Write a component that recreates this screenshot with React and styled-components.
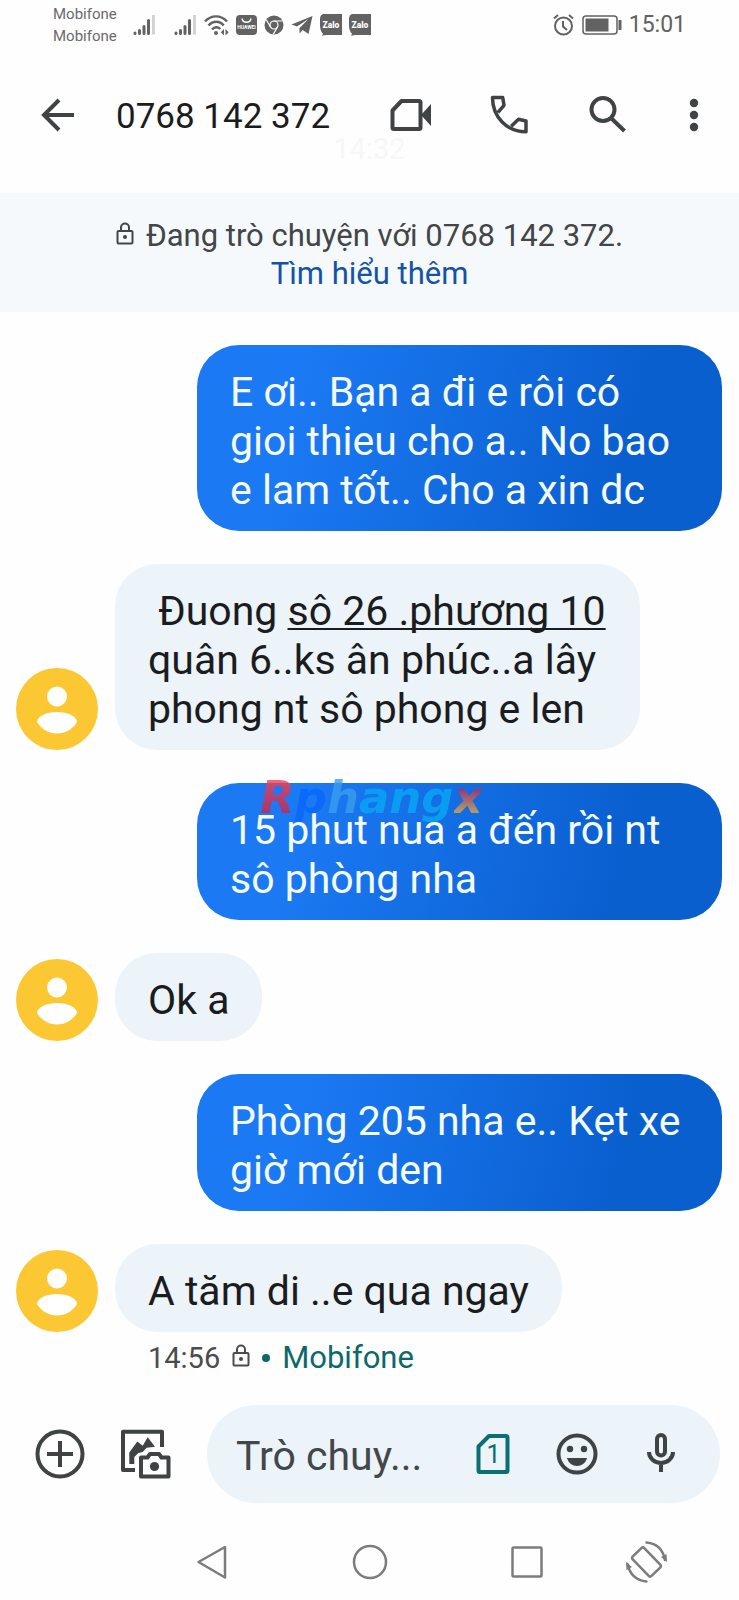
import React from 'react';
import styled, { createGlobalStyle } from 'styled-components';

const GlobalStyle = createGlobalStyle`
  *, *::before, *::after { box-sizing: border-box; }
  body {
    margin: 0;
    background: #fefefe;
    color: #1b1c1e;
    font-family: Roboto, "Liberation Sans", sans-serif;
  }
`;

const Screen = styled.div`
  display: flex;
  flex-direction: column;
  min-height: 100vh;
`;

const StatusBar = styled.div`
  display: flex;
  align-items: center;
  height: 50px;
  padding: 0 53px;
  color: #626262;
`;

const Carriers = styled.div`
  width: 80px;
  font-size: 15px;
  line-height: 22px;
  color: #6a6a6a;
`;

const StatusGroup = styled.div`
  display: flex;
  align-items: center;
  gap: 7px;
  margin-left: ${(p) => (p.$end ? 'auto' : '0')};
`;

const SignalPair = styled.div`
  display: flex;
  gap: 18px;
`;

const Clock = styled.time`
  font-size: 23px;
  line-height: 28px;
`;

const Header = styled.header`
  padding: 43px 33px 32px;
`;

const HeaderRow = styled.div`
  display: flex;
  align-items: center;
  gap: 50px;
  height: 44px;
`;

const TitleGroup = styled.div`
  display: flex;
  flex: 1;
  align-items: center;
  gap: 35px;
  min-width: 0;
`;

const Title = styled.h1`
  margin: 0;
  padding-top: 4px;
  font-size: 35px;
  font-weight: 400;
  line-height: 44px;
  white-space: nowrap;
`;

const IconButton = styled.button`
  display: flex;
  flex: none;
  align-items: center;
  justify-content: center;
  width: ${(p) => p.$width || 48}px;
  height: 48px;
  padding: 0;
  border: 0;
  background: none;
  color: ${(p) => p.$color || '#3f4344'};
  cursor: pointer;
`;

const FadedTime = styled.div`
  font-size: 29px;
  line-height: 24px;
  text-align: center;
  color: #f7f7f7;
`;

const Banner = styled.section`
  padding: 24px 16px 19px;
  background: #f6f9fc;
  color: #434648;
  font-size: 31px;
  line-height: 38px;
  text-align: center;
`;

const BannerLine = styled.div`
  display: flex;
  align-items: center;
  justify-content: center;
  gap: 12px;
`;

const BannerLink = styled.a`
  display: block;
  color: #1453a6;
  text-decoration: none;
`;

const Conversation = styled.main`
  display: flex;
  flex: 1;
  flex-direction: column;
  gap: 33px;
  padding: 33px 17px 0 16px;
`;

const Row = styled.div`
  position: relative;
  display: flex;
  align-items: flex-end;
  justify-content: ${(p) => (p.$sent ? 'flex-end' : 'flex-start')};
  gap: 17px;
`;

const Bubble = styled.p`
  max-width: 525px;
  margin: 0;
  padding: 23px 33px 16px;
  border-radius: 42px;
  background: ${(p) => (p.$sent ? 'linear-gradient(105deg, #1b79f3 20%, #0a5fcf 80%)' : '#ecf3f9')};
  color: ${(p) => (p.$sent ? '#f4fbff' : '#1b1c1e')};
  font-size: 41px;
  line-height: 49px;
  white-space: pre-wrap;
`;

const Address = styled.a`
  color: inherit;
  text-decoration: underline;
  text-decoration-thickness: 2px;
  text-underline-offset: 3px;
  text-decoration-skip-ink: none;
`;

const Watermark = styled.div`
  position: absolute;
  top: -11px;
  left: 244px;
  font: italic bold 45px/52px "DejaVu Sans", sans-serif;
  opacity: 0.8;
  white-space: nowrap;
  pointer-events: none;
`;

const Tint = styled.span`
  background: ${(p) => p.$fill};
  background-clip: text;
  color: transparent;
`;

const Meta = styled.div`
  display: flex;
  align-items: center;
  gap: 12px;
  margin: -24px 0 0 132px;
  color: #4a4c4e;
  font-size: 29px;
  line-height: 34px;
`;

const Sim = styled.span`
  color: #0d686a;
  font-size: 31px;
`;

const Dot = styled.span`
  width: 8px;
  height: 8px;
  border-radius: 50%;
  background: #0d686a;
`;

const Composer = styled.form`
  display: flex;
  align-items: center;
  gap: 36px;
  margin-top: 30px;
  padding: 0 19px 0 35px;
`;

const Field = styled.div`
  display: flex;
  flex: 1;
  align-items: center;
  gap: 36px;
  min-width: 0;
  height: 98px;
  padding: 0 35px 0 29px;
  border-radius: 49px;
  background: #ecf3f9;
`;

const TextInput = styled.input`
  flex: 1;
  min-width: 0;
  padding: 4px 0 0;
  border: 0;
  outline: 0;
  background: none;
  color: #43474a;
  font: 41px/48px Roboto, sans-serif;

  &::placeholder {
    color: #43474a;
    opacity: 1;
  }
`;

const NavBar = styled.nav`
  display: grid;
  grid-template-columns: 1fr auto 1fr;
  align-items: center;
  height: 80px;
  margin-top: 19px;
`;

const NavGroup = styled.div`
  display: flex;
  grid-column: 2;
  gap: 109px;
`;

const NavExtra = styled.div`
  padding-left: 72px;
`;

const Svg = ({ w = 48, h = 48, stroke = 4, children, ...rest }) => (
  <svg width={w} height={h} viewBox={`0 0 ${w} ${h}`} fill="none" stroke="currentColor" strokeWidth={stroke} aria-hidden="true" {...rest}>
    {children}
  </svg>
);

const Signal = () => (
  <Svg w={23} h={22} stroke={3} strokeLinecap="round">
    <path d="M2 19.5v-.5M6.5 19.5v-3M11 19.5v-7M15.5 19.5v-13" />
    <path d="M20.5 20.500V1" stroke="#d3d3d3" strokeLinecap="butt" />
  </Svg>
);

const Wifi = () => (
  <Svg w={25} h={22} stroke={2.4}>
    <path d="M1 7.500C7 .7 17 .7 23 7.500M4.500 11.500C9 6.500 15.500 6.500 19.700 11.500M8 15.500c2.500-3 6-3 8.200-.5" />
    <circle cx="12" cy="19" r="2" fill="currentColor" stroke="none" />
    <path d="M20 15v6.500l-3.200-3.200zM21.500 15v6.500l3.200-3.200z" fill="currentColor" stroke="none" />
  </Svg>
);

const StoreBadge = () => (
  <Svg w={21} h={20}>
    <rect width="21" height="20" rx="4" fill="currentColor" stroke="none" />
    <path d="M6 3.500c1 5 8 5 9 0" stroke="#fff" strokeWidth="1.400" />
    <text x="10.500" y="13.500" textAnchor="middle" fontFamily="Roboto" fontWeight="700" fontSize="5" fill="#fff" stroke="none">HUAWEI</text>
  </Svg>
);

const Browser = () => (
  <Svg w={20} h={20}>
    <circle cx="10" cy="10" r="9.500" fill="currentColor" stroke="none" />
    <circle cx="10" cy="10" r="4" stroke="#fff" strokeWidth="1.200" />
    <path d="M10 6h8.500M6.500 12L2.300 4.700M13.500 12l-4.300 7.400" stroke="#fff" strokeWidth="1.200" />
  </Svg>
);

const Plane = () => (
  <Svg w={22} h={20}>
    <path d="M21.500 1L.5 9.500l5.500 2L17.500 4 8.500 13v5.500l3.200-3.400 5.800 4z" fill="currentColor" stroke="none" />
  </Svg>
);

const ZaloBadge = () => (
  <Svg w={22} h={22}>
    <path d="M3 0h19v21H6l-4 .8 1-2Q0 17 0 11V5Q0 1 3 0z" fill="currentColor" stroke="none" />
    <text x="11" y="14" textAnchor="middle" fontFamily="Roboto" fontWeight="900" fontSize="8.500" fill="#fff" stroke="none">Zalo</text>
  </Svg>
);

const Alarm = () => (
  <Svg w={22} h={22} stroke={2}>
    <circle cx="10.500" cy="12" r="8.500" />
    <path d="M10 7v5.500l4 3.500M1 4.500L5 1M20 4.500L16 1" />
  </Svg>
);

const Battery = () => (
  <Svg w={40} h={20} stroke={1.5}>
    <rect x="1" y="1" width="34" height="18" rx="3" />
    <rect x="3.500" y="3.500" width="23" height="13" fill="currentColor" stroke="none" />
    <path d="M38 5v10" strokeWidth="3" />
  </Svg>
);

const Lock = () => (
  <Svg w={18} h={28} stroke={2}>
    <rect x="1.500" y="9" width="15" height="12.500" rx="1" />
    <path d="M5 9V5.500a4 4 0 0 1 8 0V9" />
    <circle cx="9" cy="15" r="2" fill="currentColor" stroke="none" />
  </Svg>
);

const Avatar = () => (
  <svg width="82" height="82" viewBox="0 0 82 82" role="img" aria-label="0768 142 372">
    <circle cx="41" cy="41" r="41" fill="#fbc833" />
    <circle cx="41" cy="28.500" r="10" fill="#fff" />
    <path d="M21 54C21 48 31 44 41 44s20 4 20 10c-4 7-12 11.500-20 11.500S25 61 21 54z" fill="#fff" />
  </svg>
);

const messages = [
  { id: 1, sent: true, body: 'E ơi.. Bạn a đi e rôi có gioi thieu cho a.. No bao e lam tốt.. Cho a xin dc' },
  {
    id: 2,
    body: (
      <>
        {' Đuong '}
        <Address href="#map">sô 26 .phương 10</Address>
        <br />
        quân 6..ks ân phúc..a lây phong nt sô phong e len
      </>
    ),
  },
  { id: 3, sent: true, marked: true, body: '15 phut nua a đến rồi nt sô phòng nha' },
  { id: 4, body: 'Ok a' },
  { id: 5, sent: true, body: 'Phòng 205 nha e.. Kẹt xe giờ mới den' },
  { id: 6, body: 'A tăm di ..e qua ngay' },
];

const Message = ({ sent, marked, body }) => (
  <Row $sent={sent}>
    {!sent && <Avatar />}
    <Bubble $sent={sent}>{body}</Bubble>
    {marked && (
      <Watermark>
        <Tint $fill="linear-gradient(#ff4a55, #b51e50)">R</Tint>
        <Tint $fill="#0867ff">p</Tint>
        <Tint $fill="#399eef">h</Tint>
        <Tint $fill="#08a8f7">ang</Tint>
        <Tint $fill="linear-gradient(#b5305f 35%, #d6a34c 75%)">x</Tint>
      </Watermark>
    )}
  </Row>
);

export default function App() {
  return (
    <Screen>
      <GlobalStyle />
      <StatusBar>
        <Carriers>
          <div>Mobifone</div>
          <div>Mobifone</div>
        </Carriers>
        <StatusGroup>
          <SignalPair>
            <Signal />
            <Signal />
          </SignalPair>
          <Wifi />
          <StoreBadge />
          <Browser />
          <Plane />
          <ZaloBadge />
          <ZaloBadge />
        </StatusGroup>
        <StatusGroup $end>
          <Alarm />
          <Battery />
          <Clock>15:01</Clock>
        </StatusGroup>
      </StatusBar>

      <Header>
        <HeaderRow>
          <TitleGroup>
            <IconButton type="button" aria-label="Quay lại">
              <Svg><path d="M41 24H11M26 9L11 24l15 15" /></Svg>
            </IconButton>
            <Title>0768 142 372</Title>
          </TitleGroup>
          <IconButton type="button" aria-label="Gọi video">
            <Svg>
              <path d="M13.500 10H31q1.500 0 1.500 1.500v25q0 1.500-1.500 1.500H6q-1.500 0-1.500-1.500V19.500z" strokeLinejoin="round" />
              <path d="M33 24l10-11v22z" fill="currentColor" stroke="none" />
            </Svg>
          </IconButton>
          <IconButton type="button" aria-label="Gọi điện">
            <Svg stroke={3.5} strokeLinejoin="round">
              <path d="M12 21.300L18 14.300 16.700 6.500H6.500C6.500 26 21 40.800 40 40.800V30l-7.500-1.700-7.300 7" />
            </Svg>
          </IconButton>
          <IconButton type="button" aria-label="Tìm kiếm">
            <Svg>
              <circle cx="19" cy="18.500" r="11.500" />
              <path d="M28 28l12.500 12" />
            </Svg>
          </IconButton>
          <IconButton type="button" aria-label="Tùy chọn khác" $width={24}>
            <Svg w={24}>
              <g fill="currentColor" stroke="none">
                <circle cx="12" cy="12" r="4.200" />
                <circle cx="12" cy="24" r="4.200" />
                <circle cx="12" cy="36" r="4.200" />
              </g>
            </Svg>
          </IconButton>
        </HeaderRow>
        <FadedTime>14:32</FadedTime>
      </Header>

      <Banner>
        <BannerLine>
          <Lock />
          <span>Đang trò chuyện với 0768 142 372.</span>
        </BannerLine>
        <BannerLink href="#learn-more">Tìm hiểu thêm</BannerLink>
      </Banner>

      <Conversation>
        {messages.map((m) => (
          <Message key={m.id} {...m} />
        ))}
        <Meta>
          <time>14:56</time>
          <Lock />
          <Dot />
          <Sim>Mobifone</Sim>
        </Meta>
      </Conversation>

      <Composer onSubmit={(e) => e.preventDefault()}>
        <IconButton type="button" aria-label="Thêm" $width={50}>
          <Svg w={50} h={50}>
            <circle cx="25" cy="25" r="22.500" />
            <path d="M25 12v26M12 25h26" />
          </Svg>
        </IconButton>
        <IconButton type="button" aria-label="Thư viện ảnh" $width={50}>
          <Svg w={50} h={50} strokeLinejoin="round">
            <path d="M14 41H2V2.700h39V18" />
            <path d="M8.300 35V23.500l8-11 5.400 4.200 5-8.400L34 17.700l-8.300 1-4 4.300-4.400 1-4 4v7z" fill="currentColor" stroke="none" />
            <path d="M20 28.500h6.500l2.500-3.500h9l2.500 3.500H47.500V47.500H20z" />
            <circle cx="33.500" cy="37.500" r="4.600" fill="currentColor" stroke="none" />
          </Svg>
        </IconButton>
        <Field>
          <TextInput type="text" placeholder="Trò chuy..." aria-label="Tin nhắn" />
          <IconButton type="button" aria-label="SIM 1" $color="#0b6e70">
            <Svg>
              <path d="M20 6h17q1.500 0 1.500 1.500v33q0 1.500-1.500 1.500H11q-1.500 0-1.500-1.500V16.500z" strokeLinejoin="round" />
              <text x="24.500" y="33" textAnchor="middle" fontFamily="Roboto" fontSize="25" fill="currentColor" stroke="none">1</text>
            </Svg>
          </IconButton>
          <IconButton type="button" aria-label="Biểu tượng cảm xúc">
            <Svg>
              <circle cx="24" cy="24" r="18.500" />
              <g fill="currentColor" stroke="none">
                <circle cx="17" cy="19" r="3.200" />
                <circle cx="31" cy="19" r="3.200" />
                <path d="M13.800 28h20.400q-3 8-10.200 8t-10.200-8z" />
              </g>
            </Svg>
          </IconButton>
          <IconButton type="button" aria-label="Ghi âm">
            <Svg>
              <rect x="20" y="5" width="8" height="20.500" rx="4" />
              <path d="M12 22a12 11 0 0 0 24 0M24 33v9" />
            </Svg>
          </IconButton>
        </Field>
      </Composer>

      <NavBar aria-label="Điều hướng hệ thống">
        <NavGroup>
          <IconButton type="button" aria-label="Trở về" $color="#7c7c7c">
            <Svg stroke={2.5} strokeLinejoin="round"><path d="M9.500 24L36 9v30.500z" /></Svg>
          </IconButton>
          <IconButton type="button" aria-label="Màn hình chính" $color="#7c7c7c">
            <Svg stroke={2.5}><circle cx="24" cy="24" r="16" /></Svg>
          </IconButton>
          <IconButton type="button" aria-label="Ứng dụng gần đây" $color="#7c7c7c">
            <Svg stroke={2.5}><rect x="9.500" y="9.500" width="29" height="29" rx="1" /></Svg>
          </IconButton>
        </NavGroup>
        <NavExtra>
          <IconButton type="button" aria-label="Xoay màn hình" $color="#7c7c7c">
            <Svg stroke={2.5} strokeLinejoin="round">
              <rect x="15.500" y="10.500" width="16" height="27" rx="2" transform="rotate(-44 23.500 24)" />
              <path d="M23.500 4.500Q39 6 42 22M4.500 26Q8 42 23.500 43.500" strokeLinecap="round" />
              <path d="M38 19l5.500-3 .5 8zM9 29l-5.500 3-.5-8z" fill="currentColor" stroke="none" />
            </Svg>
          </IconButton>
        </NavExtra>
      </NavBar>
    </Screen>
  );
}
